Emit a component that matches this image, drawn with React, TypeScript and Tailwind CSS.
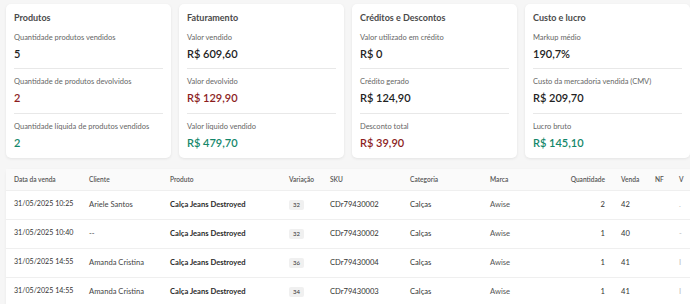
import type { ReactNode } from 'react';

type Tone = 'default' | 'red' | 'green';

type Metric = { label: string; value: string; tone?: Tone };

const cards: { title: string; metrics: Metric[] }[] = [
  {
    title: 'Produtos',
    metrics: [
      { label: 'Quantidade produtos vendidos', value: '5' },
      { label: 'Quantidade de produtos devolvidos', value: '2', tone: 'red' },
      { label: 'Quantidade líquida de produtos vendidos', value: '2', tone: 'green' },
    ],
  },
  {
    title: 'Faturamento',
    metrics: [
      { label: 'Valor vendido', value: 'R$ 609,60' },
      { label: 'Valor devolvido', value: 'R$ 129,90', tone: 'red' },
      { label: 'Valor líquido vendido', value: 'R$ 479,70', tone: 'green' },
    ],
  },
  {
    title: 'Créditos e Descontos',
    metrics: [
      { label: 'Valor utilizado em crédito', value: 'R$ 0' },
      { label: 'Crédito gerado', value: 'R$ 124,90' },
      { label: 'Desconto total', value: 'R$ 39,90', tone: 'red' },
    ],
  },
  {
    title: 'Custo e lucro',
    metrics: [
      { label: 'Markup médio', value: '190,7%' },
      { label: 'Custo da mercadoria vendida (CMV)', value: 'R$ 209,70' },
      { label: 'Lucro bruto', value: 'R$ 145,10', tone: 'green' },
    ],
  },
];

const rows = [
  { date: '31/05/2025 10:25', client: 'Ariele Santos', size: '32', sku: 'CDr79430002', qty: 2, sale: '42', v: '.' },
  { date: '31/05/2025 10:40', client: '--', size: '32', sku: 'CDr79430002', qty: 1, sale: '40', v: '-' },
  { date: '31/05/2025 14:55', client: 'Amanda Cristina', size: '36', sku: 'CDr79430004', qty: 1, sale: '41', v: 'I' },
  { date: '31/05/2025 14:55', client: 'Amanda Cristina', size: '34', sku: 'CDr79430003', qty: 1, sale: '41', v: 'I' },
];

const toneClass: Record<Tone, string> = {
  default: 'text-[#222222]',
  red: 'text-[#8c1d1d]',
  green: 'text-[#14876a]',
};

function Card({ title, metrics }: { title: string; metrics: Metric[] }) {
  return (
    <div className="w-[165px] shrink-0 rounded-[5px] bg-white px-2 pt-[7px] shadow-[0_1px_3px_rgba(0,0,0,0.08)]">
      <h3 className="text-[9px] font-bold leading-[14px] text-[#4a4a4a]">{title}</h3>
      {metrics.map((m, i) => (
        <div
          key={m.label}
          className={i > 0 ? 'border-t border-[#e8e8e8] pb-[8px] pt-[7px]' : 'pb-[7px] pt-[7px]'}
        >
          <p className="whitespace-nowrap text-[7.5px] leading-[11px] text-[#666666]">{m.label}</p>
          <p className={`mt-[3px] text-[11px] font-semibold leading-[15px] ${toneClass[m.tone ?? 'default']}`}>
            {m.value}
          </p>
        </div>
      ))}
    </div>
  );
}

function Th({ children, className = '' }: { children: ReactNode; className?: string }) {
  return (
    <th className={`h-[21px] whitespace-nowrap pt-[1px] text-left text-[6.6px] font-semibold text-[#555555] ${className}`}>
      {children}
    </th>
  );
}

export default function App() {
  return (
    <div className="h-[304px] w-[690px] overflow-hidden bg-[#f6f6f6] font-['Lato',sans-serif]">
      <div className="flex gap-2 pl-[6px] pt-[4px]">
        {cards.map((c) => (
          <Card key={c.title} title={c.title} metrics={c.metrics} />
        ))}
      </div>

      <div className="ml-[6px] mt-[11px] w-[720px] rounded-t-[4px] bg-white shadow-[0_1px_3px_rgba(0,0,0,0.06)]">
        <table className="w-full table-fixed border-collapse">
          <colgroup>
            <col className="w-[83px]" />
            <col className="w-[81px]" />
            <col className="w-[119px]" />
            <col className="w-[41px]" />
            <col className="w-[80px]" />
            <col className="w-[80px]" />
            <col className="w-[65px]" />
            <col className="w-[58px]" />
            <col className="w-[42px]" />
            <col className="w-[24px]" />
            <col className="w-[47px]" />
          </colgroup>
          <thead className="bg-[#fafafa]">
            <tr className="border-b border-[#efefef]">
              <Th className="pl-2">Data da venda</Th>
              <Th>Cliente</Th>
              <Th>Produto</Th>
              <Th>Variação</Th>
              <Th>SKU</Th>
              <Th>Categoria</Th>
              <Th>Marca</Th>
              <Th className="pr-2 text-right">Quantidade</Th>
              <Th className="pl-2">Venda</Th>
              <Th>NF</Th>
              <Th>V</Th>
            </tr>
          </thead>
          <tbody>
            {rows.map((r, i) => (
              <tr key={i} className="h-[29px] border-b border-[#efefef] text-[7.6px] text-[#333333]">
                <td className="whitespace-nowrap pl-2 text-[7.1px]">{r.date}</td>
                <td className="whitespace-nowrap text-[#444444]">{r.client}</td>
                <td className="whitespace-nowrap font-bold text-[#2a2a2a]">Calça Jeans Destroyed</td>
                <td>
                  <span className="inline-block rounded-[2px] bg-[#f0f0f0] px-[4px] py-[1px] text-[6px] leading-[8px] text-[#333333]">
                    {r.size}
                  </span>
                </td>
                <td>{r.sku}</td>
                <td>Calças</td>
                <td className="text-[#555555]">Awise</td>
                <td className="pr-2 text-right">{r.qty}</td>
                <td className="pl-2">{r.sale}</td>
                <td />
                <td className="text-[#bbbbbb]">{r.v}</td>
              </tr>
            ))}
          </tbody>
        </table>
      </div>
    </div>
  );
}
